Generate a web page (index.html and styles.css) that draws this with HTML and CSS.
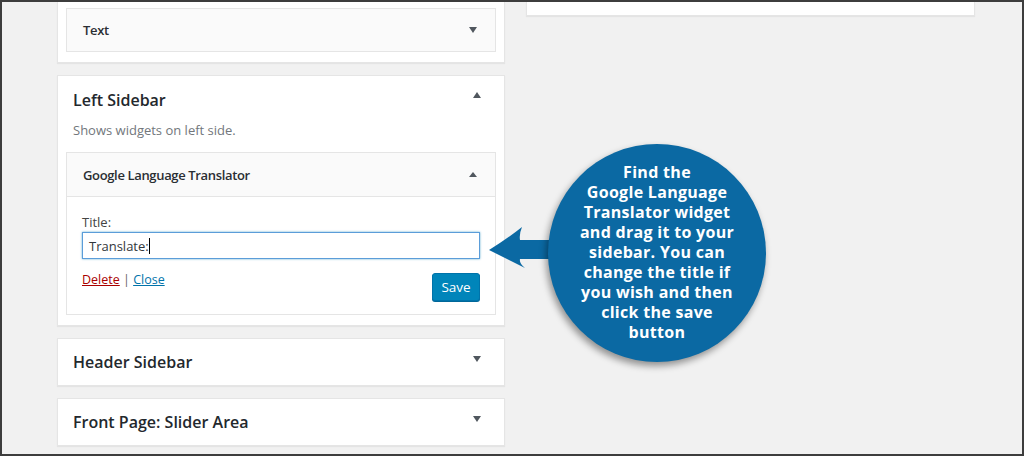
FILE: index.html
```html
<!DOCTYPE html>
<html>
<head>
<meta charset="utf-8">
<link rel="stylesheet" href="styles.css">
</head>
<body>
<div class="frame">
  <div class="col-left">
    <section class="holder holder-top">
      <div class="widget">
        <div class="widget-top">
          <span class="widget-title">Text</span>
          <span class="caret down"></span>
        </div>
      </div>
    </section>

    <section class="holder">
      <div class="sidebar-head">
        <h2>Left Sidebar</h2>
        <span class="caret up"></span>
      </div>
      <p class="desc">Shows widgets on left side.</p>
      <div class="widget open">
        <div class="widget-top">
          <span class="widget-title">Google Language Translator</span>
          <span class="caret up small"></span>
        </div>
        <div class="widget-inside">
          <label class="label">Title:</label>
          <div class="input"><span>Translate:</span><i class="cursor"></i></div>
          <div class="controls">
            <div class="links"><a class="del">Delete</a> <span class="sep">|</span> <a class="close">Close</a></div>
            <button class="save">Save</button>
          </div>
        </div>
      </div>
    </section>

    <section class="holder closed">
      <div class="sidebar-head">
        <h2>Header Sidebar</h2>
        <span class="caret down"></span>
      </div>
    </section>

    <section class="holder closed">
      <div class="sidebar-head">
        <h2>Front Page: Slider Area</h2>
        <span class="caret down"></span>
      </div>
    </section>
  </div>

  <div class="col-right">
    <section class="holder holder-right"></section>
  </div>

  <div class="callout">
    <svg class="arrow" width="80" height="50" viewBox="0 0 80 50">
      <path d="M0 24 Q18 13 33 1 Q30 8 31 14 L80 14 L80 33 L31 33 Q30 37 36 42 Q18 33 0 24 Z" fill="#0b69a3"/>
    </svg>
    <div class="bubble">Find the<br>Google Language<br>Translator widget<br>and drag it to your<br>sidebar. You can<br>change the title if<br>you wish and then<br>click the save<br>button</div>
  </div>
</div>
</body>
</html>
```

FILE: styles.css
```css
* { box-sizing: border-box; }
html, body { margin: 0; padding: 0; }
body { width: 1024px; height: 456px; overflow: hidden; font-family: "Open Sans", "Noto Sans", sans-serif; }

.frame {
  position: relative;
  width: 1024px;
  height: 456px;
  border: 2px solid #3d3d3d;
  background: #f1f1f1;
  display: flex;
  gap: 21px;
  padding-left: 55px;
  overflow: hidden;
}

.col-left {
  width: 448px;
  display: flex;
  flex-direction: column;
  gap: 12px;
}
.col-right { width: 449px; }

.holder {
  background: #fff;
  border: 1px solid #e5e5e5;
  box-shadow: 0 1px 1px rgba(0,0,0,.05);
  padding: 0 8px 10px;
}
.holder-top {
  border-top: 0;
  padding-top: 6px;
}
.holder-right {
  border-top: 0;
  height: 14px;
}

.widget {
  background: #fafafa;
  border: 1px solid #e5e5e5;
}
.widget-top {
  height: 42px;
  display: flex;
  align-items: center;
  justify-content: space-between;
  padding: 0 18px 0 16px;
}
.widget-title {
  font-size: 13px;
  font-weight: 600;
  letter-spacing: -0.35px;
  color: #2a2e33;
}
.widget.open .widget-top { border-bottom: 1px solid #e5e5e5; height: 44px; }

.caret { width: 0; height: 0; border-left: 4px solid transparent; border-right: 4px solid transparent; }
.caret.down { border-top: 6px solid #50575e; }
.caret.up { border-bottom: 6px solid #50575e; }
.caret.small { border-left-width: 4px; border-right-width: 4px; border-bottom-width: 5px; }

.sidebar-head {
  display: flex;
  align-items: center;
  justify-content: space-between;
  padding: 0 15px 0 7px;
  height: 46px;
}
.sidebar-head h2 {
  margin: 0;
  font-size: 16px;
  font-weight: 600;
  color: #23282d;
}
.holder:not(.closed) .sidebar-head { height: 48px; align-items: flex-end; padding-bottom: 13px; }
.holder:not(.closed) .sidebar-head .caret { align-self: flex-start; margin-top: 16px; }

.closed { padding-bottom: 0; }
.closed .sidebar-head .caret { margin-top: -6px; }

.desc {
  margin: -2px 0 14px 7px;
  font-size: 13px;
  color: #72777c;
  line-height: 16px;
}

.widget-inside {
  background: #fff;
  padding: 17px 15px 13px 15px;
}
.label {
  display: block;
  font-size: 13px;
  color: #444;
  line-height: 16px;
  margin-bottom: 2px;
}
.input {
  height: 27px;
  border: 1px solid #5b9dd9;
  box-shadow: 0 0 2px rgba(30,140,190,.7);
  display: flex;
  align-items: center;
  padding-left: 6px;
  font-size: 13px;
  color: #32373c;
}
.cursor {
  display: inline-block;
  width: 1px;
  height: 16px;
  background: #000;
}
.controls {
  display: flex;
  justify-content: space-between;
  align-items: flex-start;
  margin-top: 13px;
}
.links {
  font-size: 12.5px;
  color: #555;
  line-height: 16px;
}
.links a { text-decoration: underline; }
.del { color: #a00; }
.close { color: #0073aa; }
.sep { color: #666; }
.save {
  width: 48px;
  height: 28px;
  background: #0085ba;
  border: 1px solid #0073aa;
  border-radius: 3px;
  box-shadow: 0 1px 0 #006799;
  color: #fff;
  font-family: "Open Sans", "Noto Sans", sans-serif;
  font-size: 13.5px;
  padding: 0;
  margin-top: 1px;
}

.callout {
  position: absolute;
  left: 487px;
  top: 140px;
  width: 280px;
  height: 222px;
}
.arrow {
  position: absolute;
  left: 0;
  top: 84px;
}
.bubble {
  position: absolute;
  left: 59px;
  top: 2px;
  width: 218px;
  height: 218px;
  border-radius: 50%;
  background: #0b69a3;
  box-shadow: -2px 4px 7px rgba(0,0,0,.4);
  color: #fff;
  font-family: "Open Sans", "Lato", sans-serif;
  font-weight: 700;
  font-size: 16px;
  line-height: 20px;
  letter-spacing: 0.3px;
  text-align: center;
  padding-top: 18px;
}
```
